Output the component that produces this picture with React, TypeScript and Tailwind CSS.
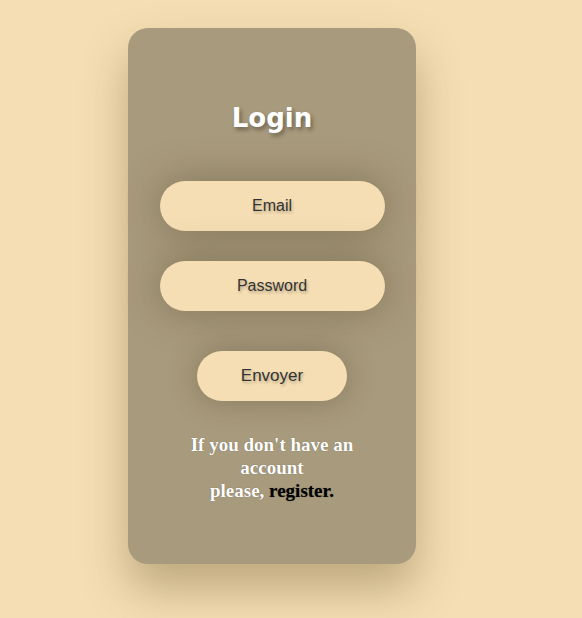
export default function App() {
  return (
    <div className="min-h-[618px] w-full bg-[#f5deb3] pt-[28px] pl-[128px]">
      <div className="flex h-[536px] w-[288px] flex-col items-center rounded-[20px] bg-[#a89a7c] shadow-[0_25px_45px_rgba(90,70,30,0.35)]">
        <h1 className="mt-[74px] text-[26px] font-bold leading-[32px] text-white [font-family:'DejaVu_Sans',sans-serif] [text-shadow:2px_3px_4px_rgba(0,0,0,0.35)]">
          Login
        </h1>
        <div className="mt-[47px] flex flex-col items-center gap-[30px]">
          <input
            placeholder="Email"
            className="h-[50px] w-[225px] rounded-full bg-[#f5deb3] text-center text-[16px] outline-none [font-family:'Liberation_Sans',sans-serif] placeholder:text-[#333] shadow-[0_0_40px_rgba(60,45,20,0.35)] [text-shadow:1px_2px_3px_rgba(0,0,0,0.25)]"
          />
          <input
            placeholder="Password"
            type="password"
            className="h-[50px] w-[225px] rounded-full bg-[#f5deb3] text-center text-[16px] outline-none [font-family:'Liberation_Sans',sans-serif] placeholder:text-[#333] shadow-[0_0_40px_rgba(60,45,20,0.35)] [text-shadow:1px_2px_3px_rgba(0,0,0,0.25)]"
          />
        </div>
        <button className="mt-[40px] h-[50px] w-[150px] rounded-full bg-[#f5deb3] text-[17px] text-[#333] [font-family:'Liberation_Sans',sans-serif] shadow-[0_0_30px_rgba(60,45,20,0.3)] [text-shadow:1px_2px_3px_rgba(0,0,0,0.25)]">
          Envoyer
        </button>
        <p className="mt-[32px] w-[180px] text-center text-[19px] font-bold leading-[23px] text-white [font-family:'Liberation_Serif',serif] [text-shadow:0_0_1px_rgba(0,0,0,0.4)]">
          If you don't have an account
          <br />
          please, <span className="text-black">register.</span>
        </p>
      </div>
    </div>
  );
}
